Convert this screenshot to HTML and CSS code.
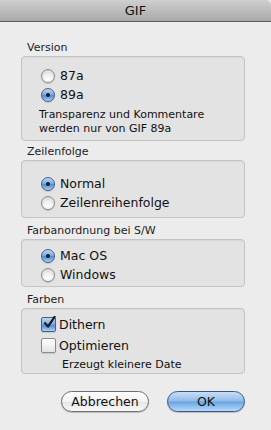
FILE: index.html
```html
<!DOCTYPE html>
<html lang="de">
<head>
  <meta charset="UTF-8">
  <title>GIF</title>
  <link rel="stylesheet" href="styles.css">
</head>
<body>
  <div class="window">
    <header class="titlebar">GIF</header>

    <main class="content">
      <section class="group group-version">
        <div class="group-label">Version</div>
        <div class="box">
          <div class="row"><span class="radio"></span>87a</div>
          <div class="row"><span class="radio on"></span>89a</div>
          <p class="note">Transparenz und Kommentare<br>werden nur von GIF 89a</p>
        </div>
      </section>

      <section class="group group-order">
        <div class="group-label">Zeilenfolge</div>
        <div class="box">
          <div class="row"><span class="radio on"></span>Normal</div>
          <div class="row"><span class="radio"></span>Zeilenreihenfolge</div>
        </div>
      </section>

      <section class="group group-bw">
        <div class="group-label">Farbanordnung bei S/W</div>
        <div class="box">
          <div class="row"><span class="radio on"></span>Mac OS</div>
          <div class="row"><span class="radio"></span>Windows</div>
        </div>
      </section>

      <section class="group group-colors">
        <div class="group-label">Farben</div>
        <div class="box">
          <div class="row check-row">
            <span class="check on">
              <svg viewBox="0 0 14 14" width="14" height="14"><path d="M3 7.2 L6 10.6 L12.6 0.8" fill="none" stroke="#1b1b1b" stroke-width="2.2" stroke-linecap="round" stroke-linejoin="round"/></svg>
            </span>Dithern
          </div>
          <div class="row check-row"><span class="check"></span>Optimieren</div>
          <p class="note small-note">Erzeugt kleinere Date</p>
        </div>
      </section>

      <div class="buttons">
        <button class="btn">Abbrechen</button>
        <button class="btn btn-default">OK</button>
      </div>
    </main>
  </div>
</body>
</html>
```

FILE: styles.css
```css
body {
  margin: 0;
  background-color: #ececec;
  font-family: "DejaVu Sans", "Liberation Sans", sans-serif;
  color: #111;
}

.window {
  width: 271px;
  height: 430px;
  background-color: #ececec;
  border-top-right-radius: 5px;
  overflow: hidden;
}

.titlebar {
  height: 21px;
  line-height: 21px;
  text-align: center;
  font-size: 13px;
  background: linear-gradient(#cfcfcf, #a9a9a9);
  border-bottom: 1px solid #5a5a5a;
  color: #111;
}

.content {
  padding: 18px 26px 0 21px;
}

.group-label {
  font-size: 11px;
  line-height: 16px;
  padding-left: 6px;
  color: #222;
}

.box {
  background-color: #e3e3e3;
  border: 1px solid #c4c4c4;
  border-radius: 4px;
  padding-left: 19px;
  box-shadow: inset 0 1px 1px rgba(0,0,0,0.05);
}

.row {
  display: flex;
  align-items: center;
  height: 19px;
  font-size: 12.5px;
}

.radio {
  width: 12px;
  height: 12px;
  border-radius: 50%;
  border: 1px solid #8a8a8a;
  background: radial-gradient(circle at 50% 80%, #ffffff 0, #f2f2f2 40%, #cfcfcf 100%);
  margin-right: 5px;
  position: relative;
  box-shadow: 0 1px 1px rgba(0,0,0,0.15);
}

.radio.on {
  border-color: #4a5f86;
  background: linear-gradient(#bfd8f2, #74a6e0 50%, #4f8bd6 55%, #a7d0f7);
}

.radio.on::after {
  content: "";
  position: absolute;
  width: 4px;
  height: 4px;
  border-radius: 50%;
  background-color: #1a1a1a;
  left: 4px;
  top: 4px;
}

.check {
  width: 13px;
  height: 13px;
  border: 1px solid #8a8a8a;
  border-radius: 2px;
  background: linear-gradient(#ffffff, #e4e4e4);
  margin-right: 3px;
  position: relative;
  box-shadow: 0 1px 1px rgba(0,0,0,0.12);
}

.check.on {
  border-color: #4a5f86;
  background: linear-gradient(#bfd8f2, #74a6e0 50%, #4f8bd6 55%, #a7d0f7);
}

.check svg {
  position: absolute;
  left: 0;
  top: -2px;
}

.note {
  margin: 0;
  font-size: 11px;
  line-height: 14px;
}

/* per-group spacing */
.group-version .box {
  padding-top: 9px;
  padding-bottom: 4px;
  margin-bottom: 3px;
}

.group-version .note {
  margin-top: 4px;
  margin-left: -2px;
}

.group-order .box {
  padding-top: 13px;
  padding-bottom: 5px;
  margin-bottom: 5px;
}

.group-bw .box {
  padding-top: 6px;
  padding-bottom: 2px;
  margin-bottom: 5px;
}

.group-colors .box {
  padding-top: 6px;
  padding-bottom: 1px;
}

.check-row + .check-row {
  margin-top: 2px;
}

.small-note {
  margin-top: 3px;
  padding-left: 21px;
}

.buttons {
  display: flex;
  justify-content: flex-end;
  gap: 18px;
  margin-top: 17px;
}

.btn {
  height: 21px;
  border-radius: 11px;
  border: 1px solid #6d6d6d;
  background: linear-gradient(#ffffff, #f2f2f2 50%, #e6e6e6 55%, #fafafa);
  font-family: "DejaVu Sans", "Liberation Sans", sans-serif;
  font-size: 12.5px;
  color: #111;
  padding: 0;
  width: 88px;
  box-shadow: 0 1px 1px rgba(0,0,0,0.2);
}

.btn-default {
  width: 78px;
  border-color: #3d5585;
  background: linear-gradient(#c9def5, #8fbbea 48%, #6aa3e3 52%, #b5dbfb);
}
```
